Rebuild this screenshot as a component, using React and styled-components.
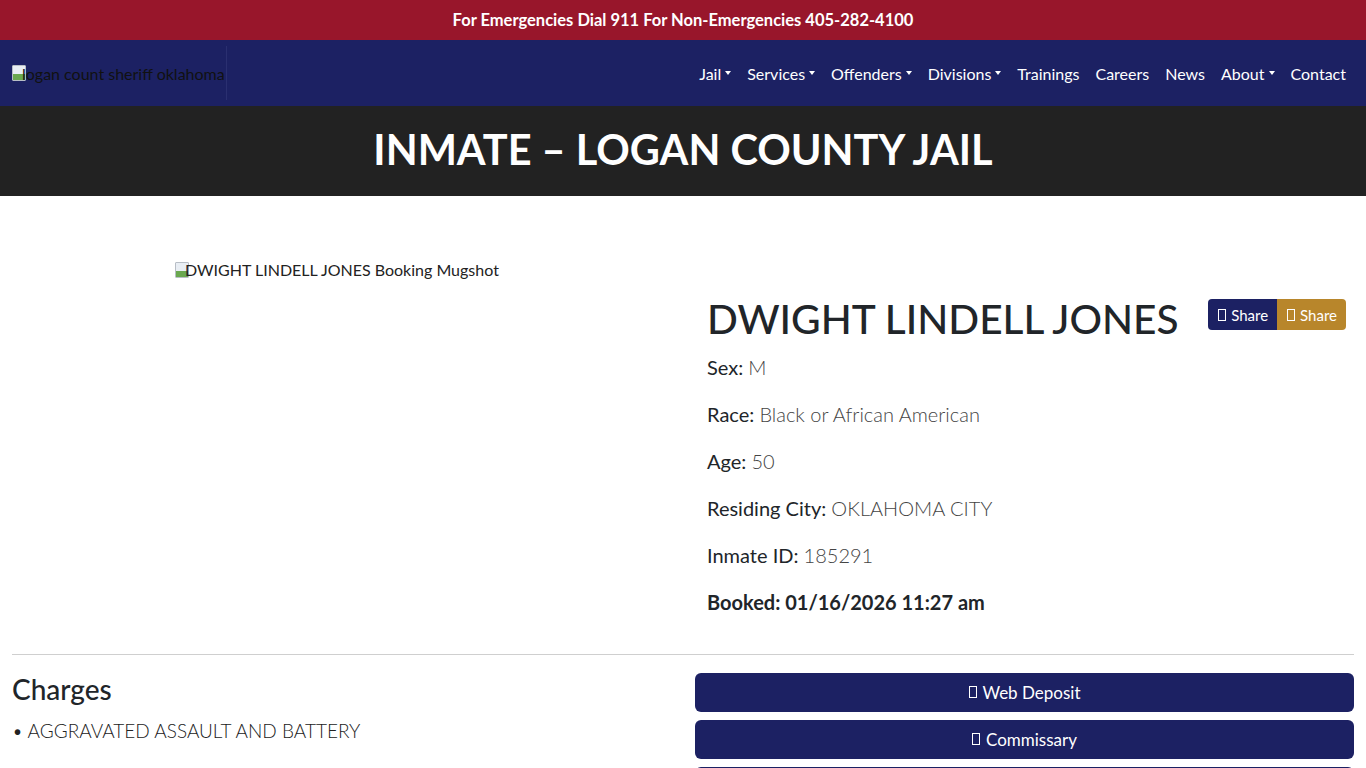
import React from 'react';
import styled, { createGlobalStyle } from 'styled-components';

const GlobalStyle = createGlobalStyle`
  body {
    margin: 0;
    font-family: Lato, "Open Sans", sans-serif;
    color: #212529;
    background: #fff;
  }
  * { box-sizing: border-box; }
`;

const navy = '#1c2163';
const gold = '#b8862b';

const AlertBar = styled.div`
  background: #98162b;
  color: #fff;
  height: 40px;
  display: flex;
  align-items: center;
  justify-content: center;
  font-size: 16.5px;
  font-weight: 700;
`;

const NavBar = styled.nav`
  background: ${navy};
  height: 66px;
  display: flex;
  align-items: center;
  justify-content: space-between;
  padding: 0 20px 0 12px;
`;

const Logo = styled.div`
  display: flex;
  align-items: center;
  height: 54px;
  padding-right: 1px;
  border-right: 1px solid #2a2f70;
  color: #111;
  font-size: 16px;
`;

const BrokenImg = styled.span`
  display: inline-block;
  width: 14px;
  height: 16px;
  margin-right: -4px;
  border: 1px solid #b8bec6;
  background: linear-gradient(to bottom, #e9eef4 55%, #6aa84f 55%);
  border-radius: 1px;
`;

const Menu = styled.ul`
  list-style: none;
  margin: 0;
  padding: 0;
  display: flex;
  align-items: center;
  gap: 16px;
`;

const MenuItem = styled.li`
  color: #fff;
  font-size: 16px;
  display: flex;
  align-items: center;
  gap: 4px;
`;

const Caret = styled.span`
  display: inline-block;
  width: 0;
  height: 0;
  border-left: 3.5px solid transparent;
  border-right: 3.5px solid transparent;
  border-top: 4px solid #fff;
`;

const TitleBand = styled.header`
  background: #222;
  height: 90px;
  display: flex;
  align-items: center;
  justify-content: center;
`;

const PageTitle = styled.h1`
  margin: 0 0 4px;
  color: #fff;
  font-size: 41.5px;
  font-weight: 700;
`;

const Container = styled.main`
  padding: 0 12px;
`;

const Row = styled.div`
  display: grid;
  grid-template-columns: 1fr 1fr;
  column-gap: 24px;
`;

const PhotoCol = styled.div`
  padding: 64px 0 0 163px;
`;

const PhotoAlt = styled.div`
  display: flex;
  align-items: center;
  font-size: 16px;
  color: #222;
`;

const InfoCol = styled.div`
  padding: 100px 0 0 12px;
`;

const NameRow = styled.div`
  display: flex;
  align-items: flex-start;
  justify-content: space-between;
`;

const Name = styled.h2`
  margin: 0;
  font-size: 40.6px;
  font-weight: 500;
  line-height: 1.15;
  color: #212529;
`;

const ShareGroup = styled.div`
  display: flex;
  margin-top: 3px;
  margin-right: 8px;
`;

const ShareButton = styled.span`
  background: ${p => p.$bg};
  color: #fff;
  font-size: 15px;
  height: 31px;
  padding: 0 9px 0 10px;
  display: flex;
  align-items: center;
  gap: 5px;
  border-radius: ${p => (p.$first ? '4px 0 0 4px' : '0 4px 4px 0')};
`;

const Tofu = styled.span`
  display: inline-block;
  width: 8px;
  height: 12px;
  border: 1px solid currentColor;
`;

const Field = styled.p`
  margin: ${p => (p.$first ? '12px' : '0')} 0 23px 0;
  font-size: 20px;
  line-height: 24px;
  font-weight: ${p => (p.$bold ? 700 : 400)};
`;

const Value = styled.span`
  font-weight: 300;
  color: #444;
`;

const Divider = styled.hr`
  border: 0;
  border-top: 1px solid #cfcfcf;
  margin: 17px 0 18px;
`;

const ChargesTitle = styled.h3`
  margin: -2px 0 0;
  font-size: 28px;
  font-weight: 500;
  line-height: 36px;
`;

const Charge = styled.div`
  font-size: 19px;
  font-weight: 300;
  margin-top: 12px;
  color: #222;
`;

const Actions = styled.div`
  display: flex;
  flex-direction: column;
  gap: 8px;
`;

const ActionButton = styled.div`
  background: ${navy};
  color: #fff;
  height: 39px;
  border-radius: 6px;
  display: flex;
  align-items: center;
  justify-content: center;
  gap: 6px;
  font-size: 17px;
`;

const navItems = [
  { label: 'Jail', dropdown: true },
  { label: 'Services', dropdown: true },
  { label: 'Offenders', dropdown: true },
  { label: 'Divisions', dropdown: true },
  { label: 'Trainings' },
  { label: 'Careers' },
  { label: 'News' },
  { label: 'About', dropdown: true },
  { label: 'Contact' },
];

const fields = [
  ['Sex', 'M'],
  ['Race', 'Black or African American'],
  ['Age', '50'],
  ['Residing City', 'OKLAHOMA CITY'],
  ['Inmate ID', '185291'],
];

const App = () => (
  <>
    <GlobalStyle />
    <AlertBar>For Emergencies Dial 911 For Non-Emergencies 405-282-4100</AlertBar>
    <NavBar>
      <Logo>
        <BrokenImg />
        logan count sheriff oklahoma
      </Logo>
      <Menu>
        {navItems.map(item => (
          <MenuItem key={item.label}>
            {item.label}
            {item.dropdown && <Caret />}
          </MenuItem>
        ))}
      </Menu>
    </NavBar>
    <TitleBand>
      <PageTitle>INMATE – LOGAN COUNTY JAIL</PageTitle>
    </TitleBand>
    <Container>
      <Row>
        <PhotoCol>
          <PhotoAlt>
            <BrokenImg />
            DWIGHT LINDELL JONES Booking Mugshot
          </PhotoAlt>
        </PhotoCol>
        <InfoCol>
          <NameRow>
            <Name>DWIGHT LINDELL JONES</Name>
            <ShareGroup>
              <ShareButton $bg={navy} $first><Tofu />Share</ShareButton>
              <ShareButton $bg={gold}><Tofu />Share</ShareButton>
            </ShareGroup>
          </NameRow>
          {fields.map(([label, value], i) => (
            <Field key={label} $first={i === 0}>
              {label}: <Value>{value}</Value>
            </Field>
          ))}
          <Field $bold>Booked: 01/16/2026 11:27 am</Field>
        </InfoCol>
      </Row>
      <Divider />
      <Row>
        <div>
          <ChargesTitle>Charges</ChargesTitle>
          <Charge>• AGGRAVATED ASSAULT AND BATTERY</Charge>
        </div>
        <Actions>
          <ActionButton><Tofu />Web Deposit</ActionButton>
          <ActionButton><Tofu />Commissary</ActionButton>
          <ActionButton><Tofu />Visitation</ActionButton>
        </Actions>
      </Row>
    </Container>
  </>
);

export default App;
